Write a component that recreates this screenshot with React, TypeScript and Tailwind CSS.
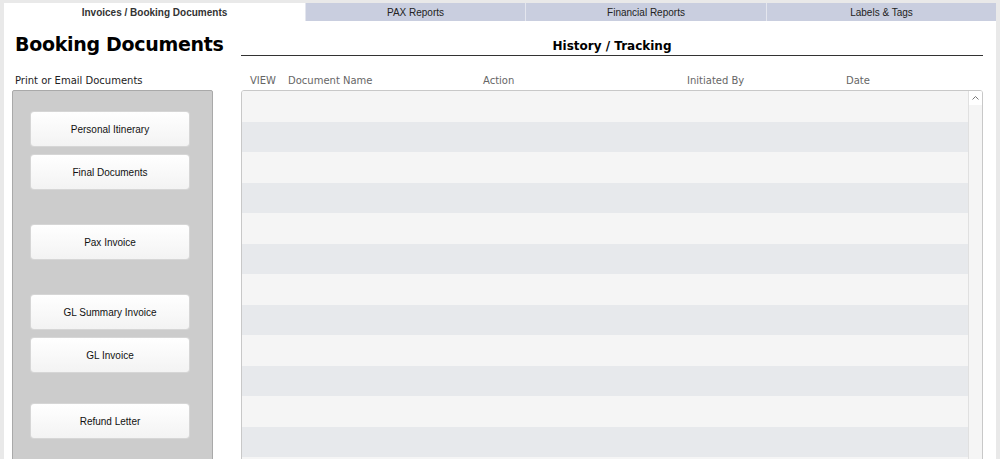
import React from 'react';

const tabs = [
	{ label: 'Invoices / Booking Documents', width: 'w-[301px]', active: true },
	{ label: 'PAX Reports', width: 'w-[220px]', active: false },
	{ label: 'Financial Reports', width: 'w-[241px]', active: false },
	{ label: 'Labels & Tags', width: 'flex-1', active: false },
];

const docButtons: { label: string; gap: string }[] = [
	{ label: 'Personal Itinerary', gap: 'mt-[21px]' },
	{ label: 'Final Documents', gap: 'mt-[9px]' },
	{ label: 'Pax Invoice', gap: 'mt-[36px]' },
	{ label: 'GL Summary Invoice', gap: 'mt-[36px]' },
	{ label: 'GL Invoice', gap: 'mt-[9px]' },
	{ label: 'Refund Letter', gap: 'mt-[32px]' },
];

const verdana = 'font-["DejaVu_Sans",Verdana,sans-serif]';
const arial = 'font-["Liberation_Sans",Arial,sans-serif]';

function DocButton({ label, gap }: { label: string; gap: string }) {
	return (
		<button
			className={`${gap} flex h-[34px] w-[158px] items-center justify-center rounded-[3px] bg-gradient-to-b from-white to-[#f3f3f3] ${arial} text-[10px] text-[#111] shadow-[0_0_0_1px_#d6d6d6]`}
		>
			{label}
		</button>
	);
}

export default function App() {
	const rows = Array.from({ length: 12 }, (_, i) => i);

	return (
		<div className="h-[459px] overflow-hidden bg-[#e9e9e9] pt-[3px]">
			<div className="mx-[4px] h-[456px] overflow-hidden bg-white">
				{/* Tabs */}
				<div className="flex h-[18px] bg-[#e9e9e9]">
					{tabs.map((tab) => (
						<div
							key={tab.label}
							className={`${tab.width} flex items-center justify-center border-l border-[#e4e6ee] ${arial} text-[10px] first:border-l-0 ${
								tab.active
									? 'bg-white font-bold text-[#333]'
									: 'bg-[#c9cedf] text-[#222]'
							}`}
						>
							{tab.label}
						</div>
					))}
				</div>

				<div className="flex px-[8px]">
					{/* Left column */}
					<div className="w-[201px] shrink-0">
						<h1
							className={`${verdana} mt-[10px] flex h-[26px] items-center whitespace-nowrap pl-[3px] text-[19px] font-bold tracking-[-0.3px] text-black`}
						>
							Booking Documents
						</h1>
						<p
							className={`${verdana} mt-[16px] flex h-[14px] items-center pl-[3px] text-[10px] text-[#222]`}
						>
							Print or Email Documents
						</p>
						<div className="mt-[3px] flex h-[400px] flex-col items-start rounded-t-[2px] border border-[#a9a9a9] bg-[#cccccc] pl-[18px]">
							{docButtons.map((b) => (
								<DocButton key={b.label} label={b.label} gap={b.gap} />
							))}
						</div>
					</div>

					{/* Right column */}
					<div className="ml-[28px] w-[742px]">
						<div
							className={`${verdana} mt-[15px] flex h-[20px] items-center justify-center border-b border-[#333] text-[12px] font-bold text-black`}
						>
							History / Tracking
						</div>
						<div
							className={`${verdana} mt-[17px] flex h-[15px] items-center text-[10px] text-[#666]`}
						>
							<span className="ml-[9px] w-[38px]">VIEW</span>
							<span className="w-[195px]">Document Name</span>
							<span className="w-[204px]">Action</span>
							<span className="w-[159px]">Initiated By</span>
							<span>Date</span>
						</div>
						<div className="mt-[2px] flex h-[400px] overflow-hidden rounded-t-[3px] border border-[#c8c8c8] bg-[#f5f5f5]">
							<div className="flex-1">
								{rows.map((i) => (
									<div
										key={i}
										className={`h-[30.5px] ${
											i % 2 === 0 ? 'bg-[#f5f5f5]' : 'bg-[#e7e9ec]'
										}`}
									/>
								))}
							</div>
							{/* Scrollbar */}
							<div className="flex w-[14px] flex-col border-l border-[#e0e0e0] bg-[#f5f5f5]">
								<div className="flex h-[14px] items-center justify-center bg-white">
									<svg width="7" height="4" viewBox="0 0 7 4">
										<path
											d="M0.5 3.5 L3.5 0.5 L6.5 3.5"
											fill="none"
											stroke="#777"
											strokeWidth="1"
										/>
									</svg>
								</div>
							</div>
						</div>
					</div>
				</div>
			</div>
		</div>
	);
}
